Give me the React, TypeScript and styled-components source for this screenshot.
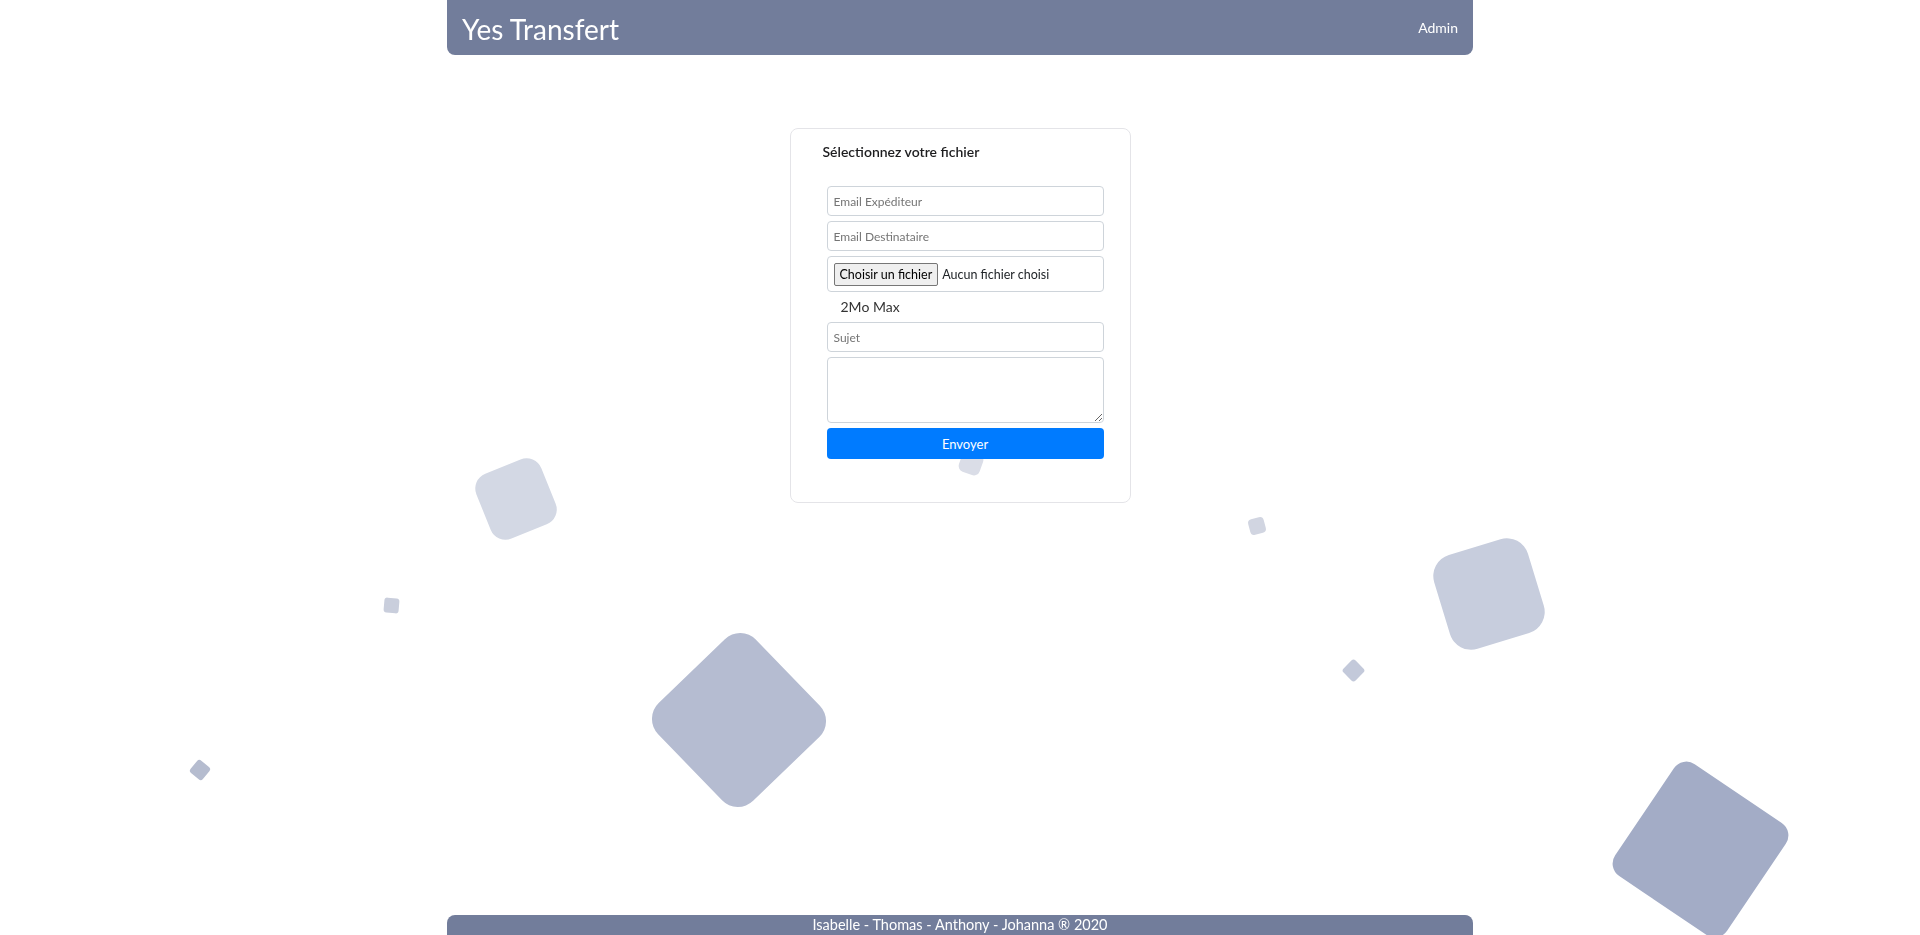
import * as React from 'react'
import styled, { createGlobalStyle } from 'styled-components'

const colors = {
  bar: '#727d9b',
  white: '#ffffff',
  text: '#212529',
  border: '#ced4da',
  card: '#e4e4e8',
  primary: '#007bff',
  placeholder: '#757575',
}

const fonts = {
  sans: '"Segoe UI", Lato, "Noto Sans", sans-serif',
}

interface Square {
  x: number
  y: number
  size: number
  rot: number
  radius: number
  color: string
}

// centre x / y of each floating square, as seen on the page
const squares: Square[] = [
  { x: 516, y: 499, size: 70, rot: -22, radius: 16, color: '#d3d8e4' },
  { x: 739, y: 720, size: 136, rot: 46, radius: 22, color: '#b5bcd1' },
  { x: 971, y: 463, size: 22, rot: 20, radius: 6, color: '#dadde7' },
  { x: 1257, y: 526, size: 16, rot: -15, radius: 4, color: '#d1d5e1' },
  { x: 1489, y: 594, size: 98, rot: -17, radius: 22, color: '#c7cddd' },
  { x: 1353, y: 670, size: 17, rot: 45, radius: 3, color: '#c3c9da' },
  { x: 391, y: 605, size: 15, rot: 5, radius: 3, color: '#c9cedc' },
  { x: 200, y: 770, size: 16, rot: 40, radius: 3, color: '#b5bccf' },
  { x: 1700, y: 849, size: 135, rot: 34, radius: 15, color: '#a3acc6' },
]

const GlobalStyle = createGlobalStyle`
  html, body {
    margin: 0;
    padding: 0;
    background: ${colors.white};
    font-family: ${fonts.sans};
    color: ${colors.text};
  }

  * {
    box-sizing: border-box;
  }
`

const Background = styled.ul`
  position: fixed;
  inset: 0;
  margin: 0;
  padding: 0;
  list-style: none;
  overflow: hidden;
  z-index: 0;
`

const FloatingSquare = styled.li<{ $x: number; $y: number; $size: number; $rot: number; $radius: number; $color: string }>`
  position: absolute;
  left: ${p => p.$x - p.$size / 2}px;
  top: ${p => p.$y - p.$size / 2}px;
  width: ${p => p.$size}px;
  height: ${p => p.$size}px;
  border-radius: ${p => p.$radius}px;
  background: ${p => p.$color};
  transform: rotate(${p => p.$rot}deg);
`

const Page = styled.div`
  position: relative;
  z-index: 1;
  min-height: 100vh;
`

const Navbar = styled.header`
  width: 1026px;
  height: 55px;
  margin: 0 auto;
  padding: 0 15px;
  display: flex;
  align-items: center;
  justify-content: space-between;
  background: ${colors.bar};
  border-radius: 0 0 8px 8px;
`

const Brand = styled.a`
  font-size: 28px;
  line-height: 36px;
  padding-top: 2px;
  color: ${colors.white};
  text-decoration: none;
`

const NavLink = styled.a`
  font-size: 14px;
  line-height: 18px;
  color: ${colors.white};
  text-decoration: none;
`

const Main = styled.main`
  padding-top: 73px;
  display: flex;
  justify-content: center;
`

const Card = styled.section`
  width: 341px;
  padding: 13px 26px 43px 32px;
  border: 1px solid ${colors.card};
  border-radius: 8px;
  background: transparent;
`

const CardTitle = styled.h5`
  margin: 0;
  font-size: 14px;
  line-height: 20px;
  font-weight: 600;
  color: #1d1d1f;
`

const Form = styled.form`
  margin: 24px 0 0 4px;
  display: flex;
  flex-direction: column;
`

const Field = styled.input`
  height: 30px;
  margin: 0 0 5px;
  padding: 0 6px;
  border: 1px solid ${colors.border};
  border-radius: 4px;
  background: ${colors.white};
  font-family: ${fonts.sans};
  font-size: 12px;
  color: ${colors.text};

  &::placeholder {
    color: ${colors.placeholder};
  }
`

const FileBox = styled.label`
  height: 36px;
  padding: 0 6px;
  display: flex;
  align-items: center;
  gap: 4px;
  border: 1px solid ${colors.border};
  border-radius: 4px;
  background: ${colors.white};
  font-size: 12.5px;
  color: ${colors.text};
`

const FileButton = styled.span`
  height: 23px;
  padding: 0 5px;
  display: inline-flex;
  align-items: center;
  border: 1px solid #767676;
  border-radius: 2px;
  background: #efefef;
  color: #000;
`

const Hint = styled.div`
  padding: 5px 14px;
  font-size: 14px;
  line-height: 20px;
  color: #333;
`

const Message = styled.textarea`
  height: 66px;
  margin: 0 0 5px;
  padding: 4px 6px;
  border: 1px solid ${colors.border};
  border-radius: 4px;
  background: ${colors.white};
  font-family: ${fonts.sans};
  font-size: 12px;
`

const SubmitButton = styled.button`
  height: 31px;
  border: none;
  border-radius: 4px;
  background: ${colors.primary};
  color: ${colors.white};
  font-family: ${fonts.sans};
  font-size: 13px;
  cursor: pointer;
`

const Footer = styled.footer`
  position: fixed;
  left: 50%;
  bottom: 0;
  width: 1026px;
  height: 20px;
  margin-left: -513px;
  background: ${colors.bar};
  border-radius: 8px 8px 0 0;
  text-align: center;
  font-size: 14.5px;
  line-height: 20px;
  color: ${colors.white};
`

const App: React.FC = () => (
  <>
    <GlobalStyle />
    <Background>
      {squares.map((s, i) => (
        <FloatingSquare key={i} $x={s.x} $y={s.y} $size={s.size} $rot={s.rot} $radius={s.radius} $color={s.color} />
      ))}
    </Background>
    <Page>
      <Navbar>
        <Brand href="#">Yes Transfert</Brand>
        <NavLink href="#">Admin</NavLink>
      </Navbar>
      <Main>
        <Card>
          <CardTitle>Sélectionnez votre fichier</CardTitle>
          <Form onSubmit={e => e.preventDefault()}>
            <Field type="email" placeholder="Email Expéditeur" />
            <Field type="email" placeholder="Email Destinataire" />
            <FileBox>
              <FileButton>Choisir un fichier</FileButton>
              <span>Aucun fichier choisi</span>
            </FileBox>
            <Hint>2Mo Max</Hint>
            <Field type="text" placeholder="Sujet" />
            <Message />
            <SubmitButton type="submit">Envoyer</SubmitButton>
          </Form>
        </Card>
      </Main>
    </Page>
    <Footer>Isabelle - Thomas - Anthony - Johanna ® 2020</Footer>
  </>
)

export default App
